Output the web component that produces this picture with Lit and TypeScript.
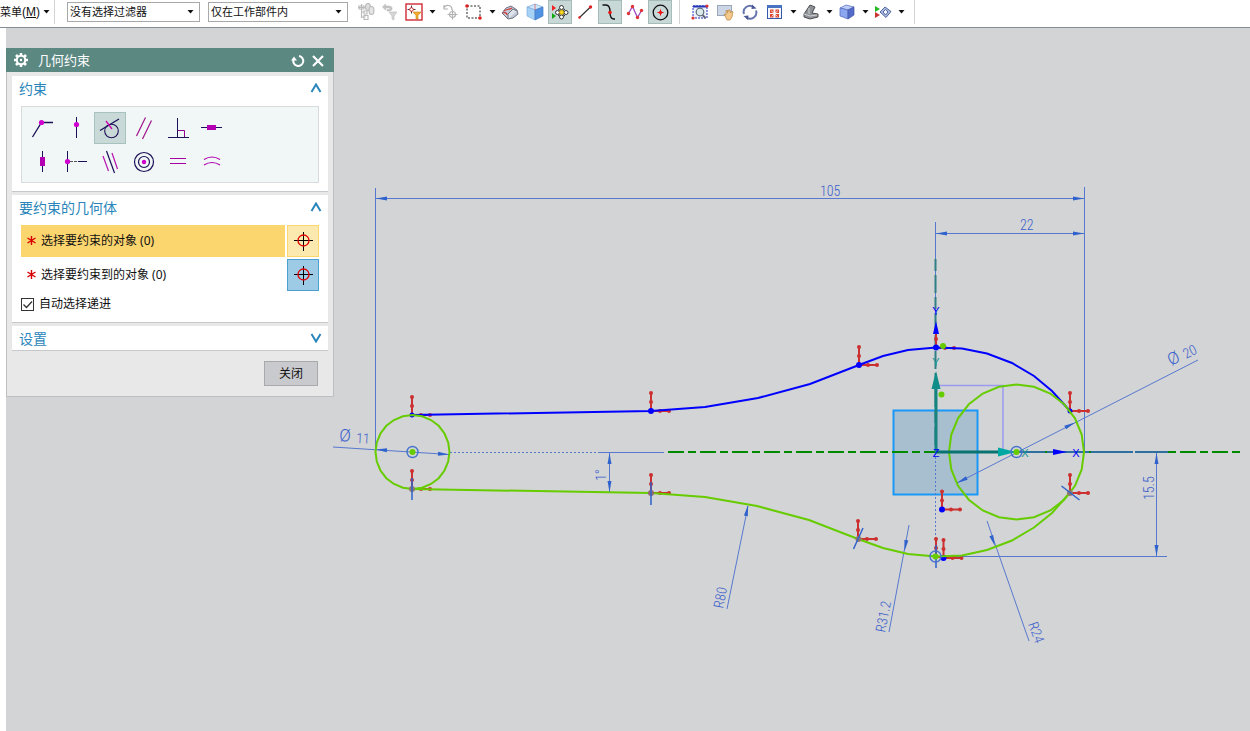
import { LitElement, html, svg, css, TemplateResult } from "lit";
import { customElement, state } from "lit/decorators.js";
import { classMap } from "lit/directives/class-map.js";

type Pt = [number, number];

const icon = (body: unknown, size = 18) =>
  html`<svg width=${size} height=${size} viewBox="0 0 ${size} ${size}" aria-hidden="true">${body}</svg>`;

const caretIcon = html`<svg class="caret" width="7" height="4" viewBox="0 0 7 4" aria-hidden="true"><path d="M.5 0h6L3.500 3.500z" fill="#111" /></svg>`;

const dot = (x: number, y: number, r: number, fill: string) =>
  svg`<circle cx=${x} cy=${y} r=${r} fill=${fill} />`;

/* ---------- toolbar glyphs, 18 x 18 ---------- */
const tb: Record<string, TemplateResult | unknown> = {
  assembly: svg`<g fill="none" stroke="#b9b9b9" stroke-width="1.1"><path d="M4.5 1v14M1 4.5h7M2 3h5v3H2zM4.5 9h3M4.5 14h4M7 8h3v3H7zM7 12.500h4v4H7z" /><ellipse cx="11" cy="4" rx="2.500" ry="3.500" fill="#dedede" /><ellipse cx="14.500" cy="7.500" rx="2.500" ry="4" fill="#e4e4e4" /></g>`,
  undoFilter: svg`<path d="M1.500 4l3-3v2c5 0 6.500 0 6.500 2.500S9 8 6 8V6.500c2 0 3 0 3-1S7 5 4.500 5v2z" fill="#c4c4c4" stroke="#b8b8b8" stroke-width=".6" /><path d="M8 9h8l-3 4v4l-2-1v-3z" fill="#d6d6d6" stroke="#bbb" stroke-width=".6" />`,
  pointFilter: svg`<rect x="1" y="1" width="16" height="16" fill="#fff" stroke="#cf2a35" stroke-width="1.400" /><path d="M6.500 2.500v8M2.500 6.500h8" stroke="#444" /><circle cx="6.500" cy="6.500" r="1.800" fill="#fff" stroke="#c22" /><path d="M8 9h8l-3 3.500V16h-2v-3.500z" fill="#f3ac2e" stroke="#c98512" stroke-width=".6" />`,
  resetPoint: svg`<g fill="none" stroke="#b3b3b3" stroke-width="1.200"><path d="M3 6c0-5 8-5 8 1M3 2v4h4" /><circle cx="11.500" cy="11.500" r="3" /><path d="M11.500 6.500v10M6.500 11.500h10" /></g>`,
  marquee: svg`<rect x="2" y="3" width="13" height="12" fill="none" stroke="#222" stroke-dasharray="2 1.500" />${dot(2, 3, 1.8, "#d22")}${dot(15, 15, 1.8, "#d22")}`,
  solid: svg`<path d="M1 10l4-5 5-2 6 4 1 4-5 4-5 1z" fill="#c3c9d6" stroke="#6d7482" /><path d="M7 16V11l5-5 4 2" fill="#dfe3ec" stroke="#6b7280" /><path d="M3 8c2-2 5-1 8-3M6 12c0-2-2-3-4-2" fill="none" stroke="#cf3a3a" stroke-width="1.200" />`,
  cube: svg`<path d="M1 4l8-3 8 3-8 3z" fill="#cfe7fb" stroke="#7ba7d4" stroke-width=".7" /><path d="M1 4l8 3v10l-8-4z" fill="#a6d2f6" stroke="#7faee0" stroke-width=".7" /><path d="M17 4L9 7v10l8-4z" fill="#4f92e4" stroke="#4479c0" stroke-width=".7" /><path d="M9 7V1" stroke="#d55" stroke-width=".7" />`,
  snap: svg`<path d="M1 2v6l4-3z" fill="#e22" /><path d="M1 10v6l4-3z" fill="#1a1" /><g fill="#fff" stroke="#222" stroke-width=".9"><circle cx="10.500" cy="4.500" r="2" /><circle cx="10.500" cy="14" r="2" /><circle cx="6.500" cy="9.500" r="2" /><circle cx="15" cy="9.500" r="2" /></g><circle cx="10.700" cy="9.300" r="2.200" fill="#ffd91c" stroke="#a37f00" stroke-width=".7" /><path d="M7 6l2 1.500M14 6l-2 1.500M7 13l2-1.500M14 13l-2-1.500" stroke="#222" />`,
  line: svg`<path d="M3 15L15 3.500" stroke="#333" stroke-width="1.200" />${dot(3.5, 14.5, 1.2, "#d22")}${dot(14.5, 4, 1.7, "#d22")}`,
  curve: svg`<path d="M1.500 2H5c3 0 4 2 4 7s1 7 4 7h1" fill="none" stroke="#111" stroke-width="1.400" />${dot(9, 9.5, 1.8, "#e11")}`,
  spline: svg`<path d="M2.500 10.500L6.500 3.500L11.500 14.500L15.500 7.500" fill="none" stroke="#a04ac0" stroke-width="1.300" />${dot(2.5, 10.5, 1.7, "#d33")}${dot(6.5, 3.5, 1.7, "#d33")}${dot(11.5, 14.5, 1.7, "#d33")}${dot(15.5, 7.5, 1.7, "#d33")}`,
  circle: svg`<circle cx="9.500" cy="9.500" r="7.300" fill="none" stroke="#111" stroke-width="1.300" /><path d="M6.500 9.500h6M9.500 6.500v6" stroke="#e11" />${dot(9.5, 9.5, 1.7, "#e11")}`,
  fit: svg`<rect x="2" y="3" width="14" height="12" fill="#eef2fb" stroke="#2334b8" stroke-dasharray="2 1" /><path d="M2 3.500h14" stroke="#2334b8" stroke-width="2" /><circle cx="9" cy="9" r="3.800" fill="#dcebe9" stroke="#5c6c78" stroke-width="1.200" /><path d="M11.500 12l3 3" stroke="#667" stroke-width="2" />${dot(2, 15, 1.6, "#d33")}${dot(16, 3, 1.6, "#d33")}`,
  pan: svg`<rect x="1.500" y="2.500" width="14" height="10" fill="#cdd6e4" stroke="#9aa7ba" /><path d="M8 11l2 1V7.500h1.500V10l1-3H14l.5 3 1.500-2 1 1-1 5-2 3h-3z" fill="#f3c98c" stroke="#b98543" stroke-width=".7" />`,
  rotate: svg`<g fill="none" stroke="#6675ad" stroke-width="2"><path d="M3 11A6.200 6.200 0 0 1 12.500 4M15 7.500A6.200 6.200 0 0 1 5.500 14.500" /></g><path d="M11 1.500l4.500 4-5 .5zM7 17l-4.500-4 5-.5z" fill="#4a5896" />`,
  window: svg`<rect x="1.500" y="2.500" width="14" height="13" fill="#f4f7fd" stroke="#3559a8" /><path d="M1 3.500h15" stroke="#4a73c4" stroke-width="3" /><path d="M4 6.500h3.500V10H4zM9.500 6.500H13V10H9.500zM4 11h3.500v3.500H4zM9.500 11H13v3.500H9.500z" fill="#e0452f" /><path d="M5 7.500l6.500 6M12 7.500l-6.500 6" stroke="#f4f7fd" stroke-width=".8" />`,
  render: svg`<path d="M2 11L8 2l5 2-3 6 6 1v3l-8 2-6-2z" fill="#8e9296" stroke="#4a4d50" /><path d="M2 11l6 2 7-1M7 5v6" fill="none" stroke="#cfd2d4" />`,
  shaded: svg`<path d="M2 5l6-3 8 2-6 3z" fill="#bccdfa" stroke="#5264b8" stroke-width=".7" /><path d="M2 5l8 2v9l-8-3z" fill="#8ca6f0" stroke="#5264b8" stroke-width=".7" /><path d="M16 4l-6 3v9l6-4z" fill="#526bc9" stroke="#4555a5" stroke-width=".7" />`,
  section: svg`<path d="M1 3v6l5-3z" fill="#2b2" /><path d="M1 9v6l5-3z" fill="#c33" /><path d="M6 9l5-5 6 4.500-5 6z" fill="#a9bbdf" stroke="#52669c" /><path d="M9 9l2.500-2.500L14 9l-2.500 3z" fill="#f4f6fb" stroke="#52669c" />`,
};

/* ---------- constraint glyphs, 32 x 32 ---------- */
const ink = "#1c1058";
const mag = "#b300b3";
const constraints: { id: string; label: string; body: unknown }[] = [
  { id: "coincident", label: "重合", body: svg`<path d="M6.500 25L15.500 10.500H27" fill="none" stroke=${ink} stroke-width="1.300" />${dot(15.5, 10.5, 2.6, "#d000d0")}` },
  { id: "on-curve", label: "点在曲线上", body: svg`<path d="M16.500 5v21" stroke=${ink} />${dot(16.5, 12.5, 2.6, "#d000d0")}` },
  { id: "tangent", label: "相切", body: svg`<path d="M6 18.500L25 7" stroke=${ink} stroke-width="1.300" /><circle cx="17.500" cy="19" r="6.800" fill="none" stroke=${ink} stroke-width="1.100" /><path d="M12 9l6 8" stroke="#d000b0" stroke-width="1.300" />` },
  { id: "parallel", label: "平行", body: svg`<path d="M8.500 24L17.500 5.500M14.500 27L23.500 8.500" stroke="#a0148c" stroke-width="1.200" />` },
  { id: "perpendicular", label: "垂直", body: svg`<path d="M15.500 6v19M6 25.500h21" stroke=${ink} /><path d="M16 18.500h6.500V25" fill="none" stroke="#900090" />` },
  { id: "horizontal", label: "水平", body: svg`<path d="M5 15.500h21" stroke=${ink} /><rect x="11" y="13" width="9" height="5" fill=${mag} />` },
  { id: "vertical", label: "竖直", body: svg`<path d="M16.500 5v21" stroke=${ink} /><rect x="14" y="11" width="5" height="9" fill=${mag} />` },
  { id: "midpoint", label: "中点", body: svg`<path d="M7.500 5v21M18 15.500h9" stroke=${ink} /><path d="M10 15.500h8" stroke="#555" stroke-dasharray="3 1" />${dot(7.5, 15.5, 2.6, "#d000d0")}` },
  { id: "collinear", label: "共线", body: svg`<path d="M12.500 5l8 22" stroke=${ink} stroke-width="1.200" /><path d="M9 10l5.500 15M18 7l5.500 16" stroke="#b814b0" stroke-width="1.200" />` },
  { id: "concentric", label: "同心", body: svg`<g fill="none" stroke=${ink} stroke-width="1.200"><circle cx="16" cy="16" r="9.500" /><circle cx="16" cy="16" r="5.500" /></g>${dot(16, 16, 2.2, "#d000d0")}` },
  { id: "equal-length", label: "等长", body: svg`<path d="M8 12.500h16M8 17.500h16" stroke="#a800a0" />` },
  { id: "equal-radius", label: "等半径", body: svg`<path d="M8 13.500q8-5 16 0M8 19q8-5 16 0" fill="none" stroke="#b000b0" stroke-width="1.200" />` },
];

const crosshair = svg`<path d="M16.500 7v19M7 15.500h19" stroke="#000" /><circle cx="16.500" cy="15.500" r="5.500" fill="none" stroke="#e00000" stroke-width="1.300" />`;

@customElement("constraint-dialog")
export class ConstraintDialog extends LitElement {
  @state() private active = "tangent";

  static styles = css`
    :host {
      display: block;
      width: 328px;
      font: 12px/18px "Noto Sans", "Noto Sans CJK SC", sans-serif;
      color: #111;
    }
    * { box-sizing: border-box; }
    button { font: inherit; color: inherit; padding: 0; margin: 0; }
    svg { display: block; }
    .title {
      display: flex;
      align-items: center;
      height: 24px;
      padding: 0 8px 0 7px;
      background: #5c8882;
      color: #fff;
      font: 13px/20px "Noto Sans CJK SC", sans-serif;
    }
    .title h1 { flex: 1; margin: 0 0 0 9px; font: inherit; }
    .title button { border: 0; background: none; width: 16px; height: 16px; margin-left: 4px; }
    .body {
      display: flex;
      flex-direction: column;
      gap: 3px;
      padding: 4px 5px 10px;
      background: #e8e8e8;
      border: 1px solid #bcbebf;
      border-top: 0;
    }
    .group { background: #fff; border-bottom: 1px solid #c6c9cb; padding: 0 9px; }
    .group h2 { margin: 0; font: 14px/22px "Noto Sans CJK SC", sans-serif; }
    .head {
      display: flex;
      align-items: center;
      justify-content: space-between;
      width: 100%;
      height: 24px;
      border: 0;
      background: none;
      color: #2a86ba;
    }
    .head span { margin-left: -2px; }
    .head svg { margin-right: -3px; }
    .constraints { padding-bottom: 8px; }
    .palette {
      display: grid;
      grid-template-columns: repeat(6, 32px);
      gap: 2px;
      margin-top: 6px;
      padding: 5px 4px 4px;
      background: #f1f6f6;
      border: 1px solid #d8dbdb;
    }
    .tool { width: 32px; height: 32px; border: 1px solid transparent; background: none; }
    .tool svg { margin: -1px; }
    .tool.on { background: #c9d9d7; border-color: #a8c2be; }
    .objects { padding-bottom: 9px; }
    .row { display: flex; gap: 2px; margin-bottom: 2px; }
    .row:first-of-type { margin-top: 6px; }
    .name { flex: 1; display: flex; align-items: center; gap: 5px; padding-left: 6px; }
    .name.current { background: #fbd56e; }
    .pick { width: 32px; height: 32px; border: 1px solid #4d9fd0; background: #9dcbe5; }
    .pick svg { margin: -1px; }
    .pick.current { border-color: #fbd56e; background: #fbe9b0; }
    .check { display: flex; align-items: center; gap: 5px; height: 18px; margin-top: 4px; }
    .box { display: grid; width: 13px; height: 13px; }
    .box > * { grid-area: 1 / 1; }
    .box input { appearance: none; margin: 0; width: 13px; height: 13px; border: 1px solid #333; background: #fff; }
    .box svg { pointer-events: none; visibility: hidden; }
    .box input:checked + svg { visibility: visible; }
    .foot { display: flex; justify-content: flex-end; padding: 7px 10px 0 0; }
    .close { width: 54px; height: 25px; border: 1px solid #a9a9ab; background: #c9cace; line-height: 20px; }
  `;

  private head(text: string, open: boolean) {
    return html`<h2><button class="head" aria-expanded=${open}>
      <span>${text}</span>
      <svg width="12" height="10" viewBox="0 0 12 10" aria-hidden="true">
        <path d=${open ? "M1.500 9L6 1.500L10.500 9" : "M1.500 1L6 8.500L10.500 1"} fill="none" stroke="#2a86ba" stroke-width="2" />
      </svg>
    </button></h2>`;
  }

  private row(text: string, current: boolean) {
    return html`<div class="row">
      <div class=${classMap({ name: true, current })}>
        <svg width="9" height="10" viewBox="0 0 9 10" aria-hidden="true"><path d="M4.500 0v9M.5 2l8 5M8.500 2l-8 5" stroke="#d80000" stroke-width="1.400" /></svg>
        <span>${text}</span>
      </div>
      <button class=${classMap({ pick: true, current })} aria-label=${text}>${icon(crosshair, 32)}</button>
    </div>`;
  }

  render() {
    return html`
      <div class="title">
        <svg width="16" height="16" viewBox="0 0 16 16" aria-hidden="true">
          <g stroke="#fff" stroke-width="2.600"><path d="M8 1v14M1 8h14M3 3l10 10M13 3L3 13" /></g>
          <circle cx="8" cy="8" r="4.200" fill="#5c8882" stroke="#fff" stroke-width="2" />
          <circle cx="8" cy="8" r="1.200" fill="#fff" />
        </svg>
        <h1>几何约束</h1>
        <button aria-label="重置"><svg width="16" height="16" viewBox="0 0 16 16"><path d="M9 4A5 5 0 1 1 3.500 7.500" fill="none" stroke="#fff" stroke-width="2" /><path d="M1 8.500l3-4 3 4z" fill="#fff" /></svg></button>
        <button aria-label="关闭窗口"><svg width="16" height="16" viewBox="0 0 16 16"><path d="M3 4l10 10M13 4l-10 10" stroke="#fff" stroke-width="2.200" /></svg></button>
      </div>
      <div class="body">
        <section class="group constraints">
          ${this.head("约束", true)}
          <div class="palette">
            ${constraints.map(
              (c) => html`<button class=${classMap({ tool: true, on: c.id === this.active })} aria-label=${c.label}
                aria-pressed=${c.id === this.active} @click=${() => (this.active = c.id)}>${icon(c.body, 32)}</button>`
            )}
          </div>
        </section>
        <section class="group objects">
          ${this.head("要约束的几何体", true)}
          ${this.row("选择要约束的对象 (0)", true)} ${this.row("选择要约束到的对象 (0)", false)}
          <label class="check">
            <span class="box"><input type="checkbox" checked /><svg width="13" height="13" viewBox="0 0 13 13"><path d="M2.500 6.500L5.500 9.500L11 3.500" fill="none" stroke="#333" stroke-width="1.300" /></svg></span>
            <span>自动选择递进</span>
          </label>
        </section>
        <section class="group">${this.head("设置", false)}</section>
        <div class="foot"><button class="close">关闭</button></div>
      </div>
    `;
  }
}

/* ---------- sketch ---------- */
const GREEN = "#66cc00";
const BLUE = "#0000ff";
const DIM = "#2f62cc";

const ring = (cx: number, cy: number, r: number) =>
  Array.from({ length: 24 }, (_, i) => {
    const a = (i * Math.PI) / 12;
    return `${(cx + r * Math.cos(a)).toFixed(1)},${(cy + r * Math.sin(a)).toFixed(1)}`;
  }).join(" ");

const upper: Pt[] = [[412, 415], [651, 411], [705, 407], [758, 398], [810, 384], [859, 365], [883, 356], [908, 350], [936, 347.5], [962, 348.5], [987, 353.5], [1012, 363], [1034, 376], [1052, 391], [1070, 411]];
const lower: Pt[] = [[412, 489], [651, 493], [705, 497], [757, 506], [809, 520], [858, 539], [883, 548], [908, 554], [936, 556.5], [962, 555.5], [987, 550], [1012, 540.5], [1034, 527.5], [1052, 513], [1070, 492.5]];

const arrow = (x: number, y: number, deg: number, fill = DIM, len = 11, half = 2) =>
  svg`<path d="M0 0L${-len} ${-half}V${half}z" fill=${fill} transform="translate(${x} ${y}) rotate(${deg})" />`;

const fixed = (x: number, y: number) => svg`
  <path class="fix" d="M${x} ${y}v-18M${x} ${y}h18" />
  ${[9, 18].map((d) => svg`${dot(x, y - d, 2, "#cc3030")}${dot(x + d, y, 2, "#cc3030")}`)}`;

const label = (x: number, y: number, deg: number, text: string, cls = "dim-text") =>
  svg`<text class=${cls} transform="translate(${x} ${y}) rotate(${deg})">${text}</text>`;

@customElement("sketch-view")
export class SketchView extends LitElement {
  static styles = css`
    :host { display: block; }
    svg { display: block; width: 100%; height: 100%; }
    .dim { fill: none; stroke: #5878d0; stroke-width: 1; }
    .thin { shape-rendering: crispEdges; }
    .dots { stroke-dasharray: 2 2; }
    .fix { fill: none; stroke: #cc3030; stroke-width: 2; }
    .dim-text { font: 300 14px "Roboto Condensed", Roboto, "Liberation Sans", sans-serif; fill: #3a60cc; }
    .diameter { font: 300 17px Roboto, "Liberation Sans", sans-serif; fill: #3a60cc; }
    .axis { font: 11px "Liberation Sans", sans-serif; text-anchor: middle; }
  `;

  render() {
    return html`<svg role="img" aria-label="草图">
      <g transform="translate(-6 -28)">
        <rect x="893.5" y="410.5" width="84" height="84" fill="#a8bfd0" stroke="#1a98f8" stroke-width="2" />
        <path d="M936 385.500H1003V452" fill="none" stroke="#9a9aee" stroke-width="1.500" />
        <path d="M668 452H1240" stroke="#008a00" stroke-width="2" stroke-dasharray="16 4 8 4" />

        <path class="dim thin" d="M375.500 188V452M1084.500 187V452M376 198.500H1084M935.500 222V345M936 233.500H1084M1156.500 453V557M936 556.500H1167M609.500 453V492M600 452.500H664" />
        <path class="dim thin dots" d="M450 452.500H600M935.500 453V556" />
        <path class="dim" d="M333 447L449 454.500M957 483L1198 360M727 609L748 506M889 632L909 525M987 521L1029 641" />
        <path d="M935.500 259V452" stroke="#2f7f86" stroke-width="2" stroke-dasharray="12 4 18 4" />
        <path d="M1003 452H1168" stroke="#2f6f9f" stroke-width="2" stroke-dasharray="42 2" />

        ${fixed(412, 415)}${fixed(651, 411)}${fixed(859, 365)}${fixed(936, 348)}${fixed(1070, 411)}
        ${fixed(412, 489)}${fixed(651, 493)}${fixed(858, 539)}${fixed(942, 509.5)}${fixed(936, 557)}${fixed(943.5, 558)}${fixed(1070, 493)}

        <polyline points=${upper.join(" ")} fill="none" stroke=${BLUE} stroke-width="2" />
        ${dot(412, 415, 2.5, BLUE)}${dot(651, 411, 3, BLUE)}${dot(859, 365, 3, BLUE)}${dot(936, 347.5, 3, BLUE)}${dot(1070, 411, 2.5, BLUE)}${dot(942, 509.5, 3, BLUE)}${dot(943.5, 558, 3, BLUE)}
        <polyline points=${lower.join(" ")} fill="none" stroke=${GREEN} stroke-width="2" />
        <polygon points=${ring(412.5, 452, 37)} fill="none" stroke=${GREEN} stroke-width="2" />
        <polygon points=${ring(1016.5, 452, 67.5)} fill="none" stroke=${GREEN} stroke-width="2" />

        ${dot(412, 489, 3, "#8f7a70")}${dot(651, 493, 3, "#8f6a70")}${dot(858.5, 539, 3, "#8f7a70")}${dot(1070, 493, 3, "#8f7a70")}
        <path d="M412 478V500M651 482V505M853.500 549L863 528M1061.500 486L1079.500 500M936 545V568" fill="none" stroke=${DIM} stroke-width="1.500" />

        <path d="M936 452V388" stroke="#16837f" stroke-width="3" />
        <path d="M931.500 389L936 371L940.500 389z" fill="#0f8d88" />
        <path d="M936 452H1000" stroke="#087370" stroke-width="3" />
        <path d="M998 447.500L1016 452L998 456.500z" fill="#00a8a4" />
        <g fill="none" stroke="#4573cc" stroke-width="1.400">
          <circle cx="412.5" cy="452" r="5.500" /><circle cx="1016.5" cy="452" r="5.500" /><circle cx="935.5" cy="556.5" r="5.500" />
        </g>
        ${dot(412.5, 452, 3, GREEN)}${dot(1016.5, 452, 3, GREEN)}${dot(935.5, 556.5, 3, GREEN)}${dot(943, 346, 3, GREEN)}${dot(941.5, 394.5, 3, GREEN)}

        ${arrow(936, 321, -90, BLUE, 13, 3)}${arrow(1067, 452, 0, BLUE, 14, 3)}
        ${arrow(376, 198.5, 180)}${arrow(1084, 198.5, 0)}${arrow(936, 233.5, 180)}${arrow(1084, 233.5, 0)}
        ${arrow(376, 449.5, 184)}${arrow(449, 454.5, 4)}${arrow(609.5, 453, -90)}${arrow(609.5, 492, 90)}
        ${arrow(1156.5, 453, -90)}${arrow(1156.5, 556, 90)}${arrow(1075, 422.5, -27)}${arrow(957, 483, 153)}
        ${arrow(748, 505, -79)}${arrow(904.5, 551, 100)}${arrow(995, 546, 70)}

        ${label(820, 196, 0, "105")}${label(1020, 230, 0, "22")}
        ${label(339, 441, 3, "Ø", "diameter")}${label(356, 443, 3, "11")}
        ${label(1171, 366, -27, "Ø", "diameter")}${label(1186, 359, -27, "20")}
        ${label(1154, 500, -90, "15.5")}${label(606, 481, -90, "1°")}
        ${label(723, 609, -79, "R80")}${label(885, 633, -79, "R31.2")}${label(1028, 624, 70, "R24")}
        <g class="axis">
          <text x="936" y="315" fill=${BLUE}>Y</text><text x="936" y="366" fill="#1b9494">Y</text>
          <text x="936" y="457" fill=${BLUE}>Z</text><text x="1025" y="457" fill="#1b9494">X</text>
          <text x="1076" y="457" fill=${BLUE}>X</text>
        </g>
      </g>
    </svg>`;
  }
}

@customElement("app-root")
export class AppRoot extends LitElement {
  static styles = css`
    :host {
      display: flex;
      flex-direction: column;
      min-height: 100vh;
      background: #fff;
      overflow: hidden;
      font: 11px/18px "Liberation Sans", "Noto Sans CJK SC", sans-serif;
      color: #111;
    }
    * { box-sizing: border-box; }
    button, select { font: inherit; color: inherit; margin: 0; padding: 0; }
    svg { display: block; }
    .bar {
      display: flex;
      align-items: flex-start;
      height: 28px;
      border-bottom: 1px solid #868b90;
    }
    .menu { display: flex; align-items: center; gap: 3px; height: 24px; border: 0; background: none; font-size: 12px; white-space: nowrap; }
    .menu .cjk { font-size: 11px; }
    .sep { width: 1px; height: 24px; background: #d4d4d4; }
    .sep.first { margin: 0 12px 0 4px; }
    .sep.mid { margin: 0 8px 0 7px; }
    .sep.last { margin-left: 7px; }
    .combo { display: grid; align-items: center; margin: 2px 8px 0 0; }
    .combo > * { grid-area: 1 / 1; }
    .combo select { appearance: none; height: 20px; padding: 0 16px 0 2px; border: 1px solid #a6a8aa; border-radius: 0; background: #fff; }
    .combo.filter { width: 133px; }
    .combo.scope { width: 140px; margin-right: 6px; }
    .combo .caret { justify-self: end; margin-right: 6px; pointer-events: none; }
    .set { display: flex; }
    .set.spaced { gap: 1px; }
    .btn { display: grid; place-items: center; width: 24px; height: 24px; border: 1px solid transparent; background: none; }
    .btn.on { background: #c8d8d6; border-color: #a5bcb8; }
    .drop { display: grid; place-items: center; width: 12px; height: 24px; border: 0; background: none; }
    .stage { position: relative; flex: 1; display: flex; margin-left: 6px; background: #d3d4d5; }
    sketch-view { flex: 1; }
    constraint-dialog { position: absolute; left: 0; top: 20px; }
  `;

  private btn(name: string, on = false) {
    return html`<button class=${classMap({ btn: true, on })} aria-label=${name}>${icon(tb[name])}</button>`;
  }

  private drop(name: string) {
    return html`<button class="drop" aria-label=${name}>${caretIcon}</button>`;
  }

  render() {
    return html`
      <header class="bar">
        <button class="menu"><span><span class="cjk">菜单</span>(<u>M</u>)</span>${caretIcon}</button>
        <i class="sep first"></i>
        <label class="combo filter"><select aria-label="类型过滤器"><option>没有选择过滤器</option></select>${caretIcon}</label>
        <label class="combo scope"><select aria-label="选择范围"><option>仅在工作部件内</option></select>${caretIcon}</label>
        <div class="set">
          ${this.btn("assembly")}${this.btn("undoFilter")}${this.btn("pointFilter")}${this.drop("pointFilter")}
          ${this.btn("resetPoint")}${this.btn("marquee")}${this.drop("marquee")}
        </div>
        <div class="set spaced">
          ${this.btn("solid")}${this.btn("cube")}${this.btn("snap", true)}${this.btn("line")}${this.btn("curve", true)}${this.btn("spline")}${this.btn("circle", true)}
        </div>
        <i class="sep mid"></i>
        <div class="set spaced">${this.btn("fit")}${this.btn("pan")}${this.btn("rotate")}${this.btn("window")}</div>
        <div class="set">
          ${this.drop("window")}${this.btn("render")}${this.drop("render")}${this.btn("shaded")}${this.drop("shaded")}${this.btn("section")}${this.drop("section")}
        </div>
        <i class="sep last"></i>
      </header>
      <main class="stage">
        <sketch-view></sketch-view>
        <constraint-dialog></constraint-dialog>
      </main>
    `;
  }
}
